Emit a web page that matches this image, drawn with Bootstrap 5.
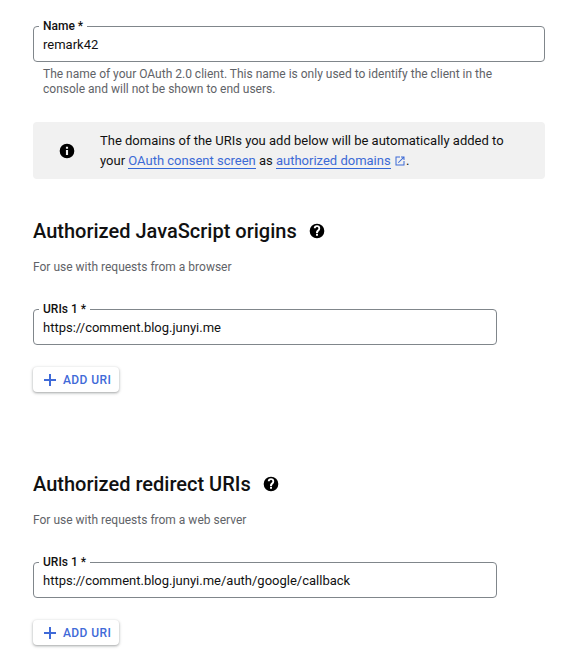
<!DOCTYPE html>
<html lang="en">
<head>
<meta charset="utf-8">
<title>OAuth client</title>
<link href="https://cdn.jsdelivr.net/npm/bootstrap@5.3.0/dist/css/bootstrap.min.css" rel="stylesheet">
<style>
html,body{height:667px;overflow:hidden}
body{font-family:Roboto,"Liberation Sans",sans-serif;color:#111;background:#fff;font-size:13px}
.page-wrap{width:512px;margin-left:33px;padding-top:26px}
.outlined{position:relative;height:36px;border:1px solid #80868b;border-radius:4px;padding:2px 9px 0;display:flex;align-items:center;font-size:13px;color:#111}
.outlined-label{position:absolute;left:5px;top:-8px;background:#fff;padding:0 4px;font-size:12px;line-height:14px;font-weight:500;color:#111}
.short-field{width:464px}
.hint-text{font-size:12px;line-height:15px;color:#5f6368;padding:5px 10px 0;margin:0}
.info-box{background:#f1f1f1;border-radius:4px;margin-top:25px;height:57px;font-size:13px;line-height:20px;color:#111;padding-left:26px;padding-right:30px}
.info-box p{margin:0 0 0 25px}
.info-box a{color:#3c6ad6;text-decoration:none;border-bottom:1px solid #3367d6}
.sec-title{font-size:20px;line-height:24px;font-weight:500;color:#111;margin:0}
.sec-one{margin-top:40px}
.sec-two{margin-top:80px}
.sec-sub{font-size:12px;line-height:16px;color:#5f6368;margin:16px 0 34px}
.add-btn{margin-top:22px;width:86px;height:25px;background:#fff;border:0;border-radius:4px;box-shadow:0 1px 2px rgba(60,64,67,.3),0 1px 3px 1px rgba(60,64,67,.15);color:#3f6ad8;font-size:12px;font-weight:500;padding:0 0 0 11px;letter-spacing:.4px;gap:7px}
.help-ico{margin-left:12px}
</style>
</head>
<body>
<div class="page-wrap">
  <div class="outlined"><span class="outlined-label">Name *</span>remark42</div>
  <p class="hint-text">The name of your OAuth 2.0 client. This name is only used to identify the client in the console and will not be shown to end users.</p>

  <div class="info-box d-flex align-items-center">
    <svg width="16" height="16" viewBox="0 0 24 24" class="flex-shrink-0"><path fill="#000" d="M12 1a11 11 0 1 0 0 22 11 11 0 0 0 0-22zm1.600 17h-3.200v-7.400h3.200zm0-9.400h-3.200V5.600h3.200z"/></svg>
    <p>The domains of the URIs you add below will be automatically added to your <a href="#">OAuth consent screen</a> as <a href="#">authorized domains</a> <svg width="12" height="12" viewBox="0 0 24 24"><path fill="#3c6ad6" d="M19 19H5V5h7V3H3v18h18v-9h-2zM14 3v2h3.600l-9.800 9.800 1.400 1.400L19 6.400V10h2V3z"/></svg>.</p>
  </div>

  <div class="sec-one d-flex align-items-center">
    <h2 class="sec-title">Authorized JavaScript origins</h2>
    <svg class="help-ico" width="16" height="16" viewBox="0 0 24 24"><path fill="#000" d="M12 1a11 11 0 1 0 0 22 11 11 0 0 0 0-22zm1.500 18h-3v-3h3zm2.600-8.200-1.100 1.100c-.9.900-1.500 1.600-1.500 3h-3v-.6c0-1.300.5-2.400 1.400-3.300l1.600-1.600c.4-.4.6-.9.6-1.400 0-1.100-.9-2-2-2s-2 .9-2 2H7.200a4.800 4.800 0 0 1 9.600 0c0 1.100-.3 2-.7 2.800z"/></svg>
  </div>
  <p class="sec-sub">For use with requests from a browser</p>
  <div class="outlined short-field"><span class="outlined-label">URIs 1 *</span>https://comment.blog.junyi.me</div>
  <button type="button" class="add-btn d-flex align-items-center"><svg width="12" height="12" viewBox="0 0 12 12"><path fill="#3f6ad8" d="M5 0h2v5h5v2H7v5H5V7H0V5h5z"/></svg>ADD URI</button>

  <div class="sec-two d-flex align-items-center">
    <h2 class="sec-title">Authorized redirect URIs</h2>
    <svg class="help-ico" width="16" height="16" viewBox="0 0 24 24"><path fill="#000" d="M12 1a11 11 0 1 0 0 22 11 11 0 0 0 0-22zm1.500 18h-3v-3h3zm2.600-8.200-1.100 1.100c-.9.900-1.500 1.600-1.500 3h-3v-.6c0-1.300.5-2.400 1.400-3.300l1.600-1.600c.4-.4.6-.9.6-1.400 0-1.100-.9-2-2-2s-2 .9-2 2H7.200a4.800 4.800 0 0 1 9.600 0c0 1.100-.3 2-.7 2.800z"/></svg>
  </div>
  <p class="sec-sub">For use with requests from a web server</p>
  <div class="outlined short-field"><span class="outlined-label">URIs 1 *</span>https://comment.blog.junyi.me/auth/google/callback</div>
  <button type="button" class="add-btn d-flex align-items-center"><svg width="12" height="12" viewBox="0 0 12 12"><path fill="#3f6ad8" d="M5 0h2v5h5v2H7v5H5V7H0V5h5z"/></svg>ADD URI</button>
</div>
<script src="https://cdn.jsdelivr.net/npm/bootstrap@5.3.0/dist/js/bootstrap.bundle.min.js"></script>
</body>
</html>
